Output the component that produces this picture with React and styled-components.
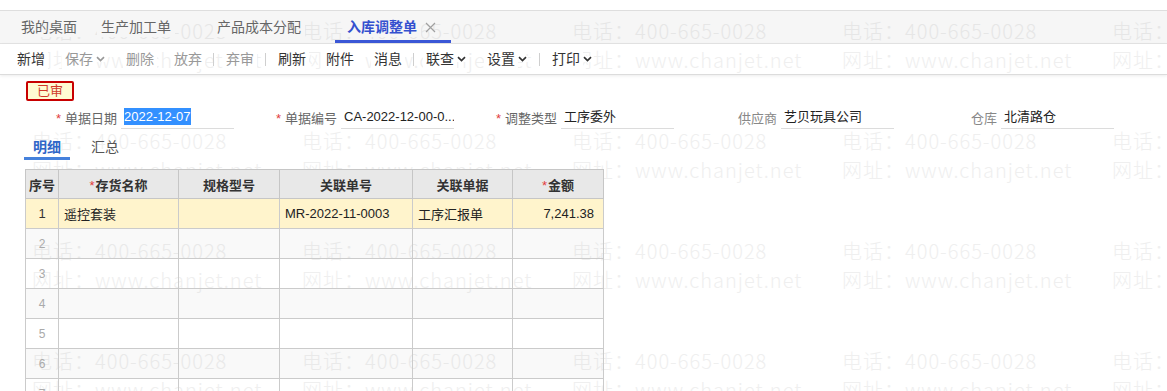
import React from 'react';
import styled, { createGlobalStyle } from 'styled-components';

const GlobalStyle = createGlobalStyle`
  html, body {
    margin: 0;
    padding: 0;
    background: #fff;
  }
  body {
    font-family: "Liberation Sans", "Noto Sans CJK SC", sans-serif;
    color: #333;
  }
`;

const tabs = [
  { title: '我的桌面', closable: false },
  { title: '生产加工单', closable: true },
  { title: '产品成本分配', closable: true },
  { title: '入库调整单', closable: true, active: true },
];

const tools = [
  { label: '新增' },
  { label: '保存', menu: true, disabled: true },
  { label: '删除', disabled: true },
  { label: '放弃', disabled: true },
  { sep: true },
  { label: '弃审', disabled: true },
  { sep: true },
  { label: '刷新' },
  { label: '附件' },
  { label: '消息' },
  { sep: true },
  { label: '联查', menu: true },
  { label: '设置', menu: true },
  { sep: true },
  { label: '打印', menu: true },
];

const fields = [
  { label: '单据日期', required: true, value: '2022-12-07', selected: true },
  { label: '单据编号', required: true, value: 'CA-2022-12-00-0...' },
  { label: '调整类型', required: true, value: '工序委外' },
  { label: '供应商', value: '艺贝玩具公司' },
  { label: '仓库', value: '北清路仓' },
];

const columns = [
  { title: '序号', width: 33 },
  { title: '存货名称', width: 120, required: true },
  { title: '规格型号', width: 101 },
  { title: '关联单号', width: 133 },
  { title: '关联单据', width: 100 },
  { title: '金额', width: 91, required: true },
];

const rows = [
  ['遥控套装', '', 'MR-2022-11-0003', '工序汇报单', '7,241.38'],
  [], [], [], [], [], [],
];

const Chevron = ({ color }) => (
  <svg width="9" height="6" viewBox="0 0 9 6">
    <path d="M1 1.2 L4.5 4.6 L8 1.2" fill="none" stroke={color} strokeWidth="1.7" />
  </svg>
);

const CloseIcon = () => (
  <svg width="11" height="11" viewBox="0 0 11 11">
    <path d="M1 1 L10 10 M10 1 L1 10" stroke="#a0a0a0" strokeWidth="1.2" />
  </svg>
);

export default function App() {
  return (
    <Page>
      <GlobalStyle />
      <Watermark>
        {Array.from({ length: 20 }).map((_, i) => (
          <WmTile key={i}>
            <WmLine>电话：400-665-0028</WmLine>
            <WmLine>网址：www.chanjet.net</WmLine>
          </WmTile>
        ))}
      </Watermark>

      <Content>
        <TabBar>
          {tabs.map(t => (
            <Tab key={t.title} active={t.active}>
              <TabLabel active={t.active}>{t.title}</TabLabel>
              {t.closable && (
                <CloseSlot visible={t.active}>
                  <CloseIcon />
                </CloseSlot>
              )}
            </Tab>
          ))}
        </TabBar>

        <Toolbar>
          {tools.map((t, i) =>
            t.sep ? (
              <Sep key={i} />
            ) : (
              <ToolItem key={i} disabled={t.disabled}>
                <ToolText>{t.label}</ToolText>
                {t.menu && (
                  <MenuMark>
                    <Chevron color={t.disabled ? '#999' : '#333'} />
                  </MenuMark>
                )}
              </ToolItem>
            )
          )}
        </Toolbar>

        <BadgeRow>
          <Badge>已审</Badge>
        </BadgeRow>

        <FieldRow>
          {fields.map(f => (
            <Field key={f.label}>
              <Label optional={!f.required}>
                {f.required && <Star gap>*</Star>}
                {f.label}
              </Label>
              <Input>
                {f.selected ? <Selected>{f.value}</Selected> : f.value}
              </Input>
            </Field>
          ))}
        </FieldRow>

        <DetailTabs>
          <DetailTab active>明细</DetailTab>
          <DetailTab>汇总</DetailTab>
        </DetailTabs>

        <Grid>
          <colgroup>
            {columns.map(c => (
              <col key={c.title} style={{ width: c.width }} />
            ))}
          </colgroup>
          <thead>
            <tr>
              {columns.map(c => (
                <Th key={c.title}>
                  {c.required && <Star>*</Star>}
                  {c.title}
                </Th>
              ))}
            </tr>
          </thead>
          <tbody>
            {rows.map((r, i) => (
              <Tr key={i} current={i === 0} even={i % 2 === 1}>
                <NoCell first={i === 0}>{i + 1}</NoCell>
                <Td>{r[0]}</Td>
                <Td>{r[1]}</Td>
                <Td>{r[2]}</Td>
                <Td>{r[3]}</Td>
                <Td right>{r[4]}</Td>
              </Tr>
            ))}
          </tbody>
        </Grid>
      </Content>
    </Page>
  );
}

const Page = styled.div`
  position: relative;
  min-height: 100vh;
  overflow: hidden;
`;

const Watermark = styled.div`
  position: absolute;
  inset: 0;
  z-index: 0;
  display: grid;
  grid-template-columns: repeat(5, 270px);
  grid-auto-rows: 110px;
  padding: 16px 0 0 32px;
  pointer-events: none;
  user-select: none;
`;

const WmTile = styled.div`
  display: flex;
  flex-direction: column;
`;

const WmLine = styled.div`
  font-family: "Noto Sans CJK SC", sans-serif;
  font-size: 20px;
  font-weight: 300;
  line-height: 29px;
  letter-spacing: 1px;
  color: #efefef;
  white-space: nowrap;
`;

const Content = styled.div`
  position: relative;
  z-index: 1;
  padding-top: 10px;
`;

const TabBar = styled.div`
  display: flex;
  align-items: stretch;
  height: 32px;
  padding-left: 9px;
  background: rgba(0, 0, 0, 0.035);
  border-top: 1px solid #dedede;
  border-bottom: 1px solid #e4e4e4;
`;

const Tab = styled.div`
  display: flex;
  align-items: center;
  padding: 3px 12px 0;
  box-sizing: border-box;
  border-bottom: 3px solid ${({ active }) => (active ? '#3b57d6' : 'transparent')};
`;

const TabLabel = styled.span`
  font-size: 14px;
  line-height: 20px;
  padding: 0 4px;
  margin: 0 -4px;
  background: #f6f6f6;
  color: ${({ active }) => (active ? '#3450cf' : '#666')};
  font-weight: ${({ active }) => (active ? 'bold' : 'normal')};
`;

const CloseSlot = styled.span`
  display: flex;
  align-items: center;
  width: 14px;
  margin-left: 8px;
  visibility: ${({ visible }) => (visible ? 'visible' : 'hidden')};
`;

const Toolbar = styled.div`
  display: flex;
  align-items: center;
  height: 30px;
  padding-left: 7px;
  border-bottom: 1px solid #dcdcdc;
  box-shadow: 0 1px 3px rgba(0, 0, 0, 0.08);
`;

const ToolItem = styled.div`
  display: flex;
  align-items: center;
  padding: 0 10px;
  font-size: 14px;
  color: ${({ disabled }) => (disabled ? '#999' : '#333')};
`;

const ToolText = styled.span`
  background: #fff;
  padding: 0 3px;
  margin: 0 -3px;
  line-height: 20px;
`;

const MenuMark = styled.span`
  display: flex;
  width: 10px;
  margin-left: 3px;
  background: #fff;
`;

const Sep = styled.span`
  width: 1px;
  height: 13px;
  margin: 0 2px 0 1px;
  background: #cfcfcf;
`;

const BadgeRow = styled.div`
  display: flex;
  padding: 6px 0 0 26px;
`;

const Badge = styled.div`
  box-sizing: border-box;
  width: 48px;
  height: 20px;
  border: 2px solid #c80000;
  border-radius: 2px;
  background: #fffbd2;
  color: #d03a2a;
  font-size: 13px;
  line-height: 16px;
  text-align: center;
`;

const FieldRow = styled.div`
  display: flex;
  padding: 4px 0 0 14px;
`;

const Field = styled.div`
  display: flex;
  align-items: center;
  width: 220px;
  height: 24px;
`;

const Label = styled.label`
  width: 103px;
  margin-right: 4px;
  text-align: right;
  font-size: 13px;
  color: ${({ optional }) => (optional ? '#888' : '#666')};
  white-space: nowrap;
`;

const Star = styled.span`
  color: #e23c3c;
  margin-right: ${({ gap }) => (gap ? '4px' : '1px')};
  font-weight: normal;
`;

const Input = styled.div`
  box-sizing: border-box;
  width: 113px;
  height: 24px;
  padding-left: 3px;
  border-bottom: 1px solid #dcdcdc;
  font-size: 13px;
  line-height: 23px;
  color: #222;
  white-space: nowrap;
  overflow: hidden;
`;

const Selected = styled.span`
  background: #3390ff;
  color: #fff;
  padding: 1px 0;
`;

const DetailTabs = styled.div`
  display: flex;
  gap: 12px;
  margin-top: 4px;
  padding-left: 24px;
`;

const DetailTab = styled.div`
  padding: 4px 9px 0;
  font-size: 14px;
  line-height: 20px;
  color: ${({ active }) => (active ? '#2f66c8' : '#555')};
  font-weight: ${({ active }) => (active ? 'bold' : 'normal')};
  border-bottom: 3px solid ${({ active }) => (active ? '#4581dc' : 'transparent')};
`;

const Grid = styled.table`
  margin: 9px 0 0 25px;
  width: 578px;
  table-layout: fixed;
  border-collapse: collapse;
  font-size: 13px;
`;

const Th = styled.th`
  height: 28px;
  padding: 0;
  background: #e8e8e8;
  border: 1px solid #c6c6c6;
  font-weight: bold;
  color: #333;
  text-align: center;
  white-space: nowrap;
`;

const Tr = styled.tr`
  height: 30px;
  background: ${({ current, even }) =>
    current ? '#fff4cc' : even ? 'rgba(0, 0, 0, 0.025)' : 'transparent'};
`;

const Td = styled.td`
  padding: 0 ${({ right }) => (right ? '9px' : '5px')};
  border: 1px solid #cbcbcb;
  text-align: ${({ right }) => (right ? 'right' : 'left')};
  color: #222;
  white-space: nowrap;
  overflow: hidden;
`;

const NoCell = styled.td`
  padding: 0;
  border: 1px solid #cbcbcb;
  text-align: center;
  font-size: ${({ first }) => (first ? '13px' : '12px')};
  color: ${({ first }) => (first ? '#333' : '#aaa')};
`;
